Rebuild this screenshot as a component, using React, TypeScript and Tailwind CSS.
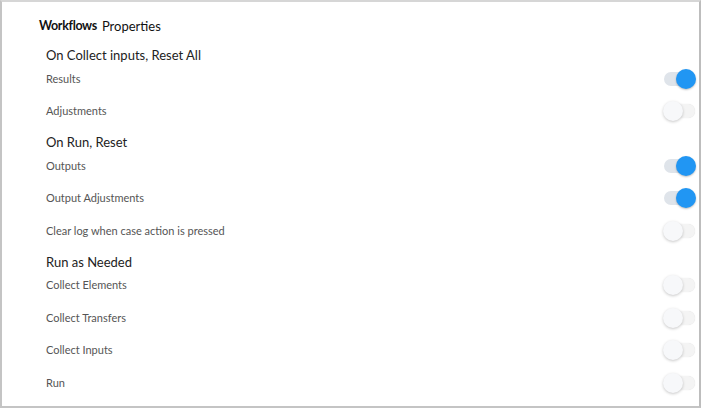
import React from "react";

type Row =
  | { kind: "heading"; label: string }
  | { kind: "item"; label: string; on: boolean };

const rows: Row[] = [
  { kind: "heading", label: "On Collect inputs, Reset All" },
  { kind: "item", label: "Results", on: true },
  { kind: "item", label: "Adjustments", on: false },
  { kind: "heading", label: "On Run, Reset" },
  { kind: "item", label: "Outputs", on: true },
  { kind: "item", label: "Output Adjustments", on: true },
  { kind: "item", label: "Clear log when case action is pressed", on: false },
  { kind: "heading", label: "Run as Needed" },
  { kind: "item", label: "Collect Elements", on: false },
  { kind: "item", label: "Collect Transfers", on: false },
  { kind: "item", label: "Collect Inputs", on: false },
  { kind: "item", label: "Run", on: false },
];

function Toggle({ on }: { on: boolean }) {
  return (
    <div className="relative w-[33px] h-[20px] shrink-0">
      <div
        className={
          on
            ? "absolute left-[1px] top-[3px] w-[31px] h-[14px] rounded-full bg-[#dfe4ea]"
            : "absolute left-[1px] top-[3px] w-[31px] h-[14px] rounded-full bg-[#f4f4f4] shadow-[0_0_1px_rgba(0,0,0,0.15)]"
        }
      />
      <div
        className={
          on
            ? "absolute left-[13px] top-0 w-[20px] h-[20px] rounded-full bg-[#2196f3] shadow-[0_1px_2px_rgba(0,0,0,0.25)]"
            : "absolute left-0 top-0 w-[20px] h-[20px] rounded-full bg-[#f7f8fa] shadow-[0_1px_3px_rgba(0,0,0,0.22)]"
        }
      />
    </div>
  );
}

export default function App() {
  return (
    <div
      className="w-[703px] h-[409px] bg-white"
      style={{ fontFamily: 'Lato, "Open Sans", sans-serif' }}
    >
      <div className="w-[701px] h-[408px] border-l-2 border-r-2 border-b-2 border-t-2 border-l-[#c4c4c4] border-r-[#bdbdbd] border-b-[#c4c4c4] border-t-[#d6d6d6] flex flex-col">
        <div className="pl-[37px] pt-[16px] h-[38px] flex items-start leading-[16px] text-[#111]">
          <span className="font-bold text-[12.5px] tracking-[-0.35px]">Workflows</span>
          <span className="ml-[5px] text-[13px]">Properties</span>
        </div>
        <div className="flex flex-col">
          {rows.map((r, i) =>
            r.kind === "heading" ? (
              <div
                key={i}
                className="h-[22px] pl-[44px] pt-[7px] text-[13px] leading-[16px] text-[#222]"
              >
                {r.label}
              </div>
            ) : (
              <div
                key={i}
                className="h-[32.5px] pl-[44px] pr-[3px] pt-[1px] flex items-center justify-between"
              >
                <span className="text-[11px] text-[#555]">{r.label}</span>
                <Toggle on={r.on} />
              </div>
            )
          )}
        </div>
      </div>
    </div>
  );
}
